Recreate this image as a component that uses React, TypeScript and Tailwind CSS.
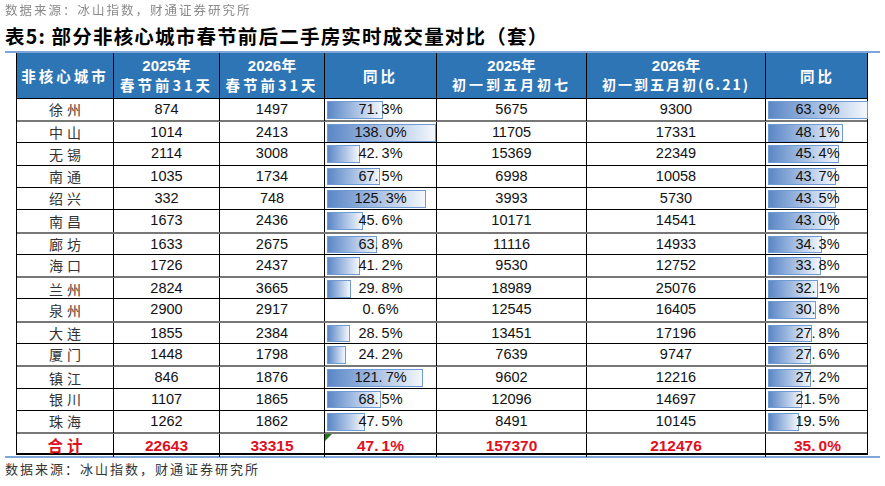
const rows: [string, number, number, number, number, number, number][] = [
  ["徐州", 874, 1497, 71.3, 5675, 9300, 63.9],
  ["中山", 1014, 2413, 138.0, 11705, 17331, 48.1],
  ["无锡", 2114, 3008, 42.3, 15369, 22349, 45.4],
  ["南通", 1035, 1734, 67.5, 6998, 10058, 43.7],
  ["绍兴", 332, 748, 125.3, 3993, 5730, 43.5],
  ["南昌", 1673, 2436, 45.6, 10171, 14541, 43.0],
  ["廊坊", 1633, 2675, 63.8, 11116, 14933, 34.3],
  ["海口", 1726, 2437, 41.2, 9530, 12752, 33.8],
  ["兰州", 2824, 3665, 29.8, 18989, 25076, 32.1],
  ["泉州", 2900, 2917, 0.6, 12545, 16405, 30.8],
  ["大连", 1855, 2384, 28.5, 13451, 17196, 27.8],
  ["厦门", 1448, 1798, 24.2, 7639, 9747, 27.6],
  ["镇江", 846, 1876, 121.7, 9602, 12216, 27.2],
  ["银川", 1107, 1865, 68.5, 12096, 14697, 21.5],
  ["珠海", 1262, 1862, 47.5, 8491, 10145, 19.5],
];

// rows whose top line is the thicker grey rule
const greyTop = [1, 6, 8, 10, 12];

const cols = "grid grid-cols-[97px_106px_105px_112px_150px_179px_103px]";
const cjk = "font-['Noto_Sans_CJK_SC',sans-serif]";
const num = "font-['Liberation_Sans','Noto_Sans_CJK_SC',sans-serif]";

function Pct({ v }: { v: number }) {
  const [a, b] = v.toFixed(1).split(".");
  return (
    <span className="relative">
      {a}.<span className="ml-[3px]">{b}%</span>
    </span>
  );
}

function BarCell({ v, max, full, last }: { v: number; max: number; full: number; last?: boolean }) {
  const w = (v / max) * full;
  return (
    <div className={`relative flex items-center justify-center ${last ? "" : "border-r border-black"}`}>
      {w > 1 && (
        <div
          className="absolute left-[2px] top-[2px] bottom-[2px] border border-[#6f9ad3] bg-gradient-to-r from-[#5b87c6] to-[#f4f7fc]"
          style={{ width: w }}
        />
      )}
      <Pct v={v} />
    </div>
  );
}

export default function App() {
  return (
    <div className="w-[885px] h-[486px] bg-white relative overflow-hidden">
      <div className={`${cjk} pl-[5px] pt-[1px] text-[12.5px] tracking-[2px] text-[#8a8a8a] blur-[0.3px]`}>
        数据来源：冰山指数，财通证券研究所
      </div>
      <div className={`${cjk} pl-[5px] mt-[3px] text-[19.5px] leading-[26px] font-bold tracking-[1.2px] text-black`}>
        表5: 部分非核心城市春节前后二手房实时成交量对比（套）
      </div>
      <div className="mt-[2px] ml-[5px] w-[875px] h-[2px] bg-[#7ea6d9]" />

      <div className="ml-[16px] w-[852px] border-x border-black">
        {/* header */}
        <div className={`${cols} h-[45px] bg-[#2e75b6] text-white font-bold text-[15px] leading-[19px]`}>
          <div className={`${cjk} flex items-center justify-center tracking-[3px] text-[14.5px] border-r border-black`}>非核心城市</div>
          {[
            ["2025年", "春节前31天"],
            ["2026年", "春节前31天"],
          ].map((h, i) => (
            <div key={i} className="flex flex-col items-center justify-center border-r border-black">
              <span className={num}>{h[0]}</span>
              <span className={`${cjk} tracking-[3px] text-[14.5px]`}>{h[1]}</span>
            </div>
          ))}
          <div className={`${cjk} flex items-center justify-center tracking-[3px] text-[14.5px] border-r border-black`}>同比</div>
          <div className="flex flex-col items-center justify-center border-r border-black">
            <span className={num}>2025年</span>
            <span className={`${cjk} tracking-[3px] text-[14px]`}>初一到五月初七</span>
          </div>
          <div className="flex flex-col items-center justify-center border-r border-black">
            <span className={num}>2026年</span>
            <span className={`${cjk} tracking-[2px] text-[14px]`}>初一到五月初(6.21)</span>
          </div>
          <div className={`${cjk} flex items-center justify-center tracking-[3px] text-[14.5px]`}>同比</div>
        </div>

        {/* body */}
        {rows.map((r, i) => (
          <div
            key={r[0]}
            className={`${cols} h-[22.3px] text-[14.5px] text-[#111] ${num} ${
              greyTop.includes(i) ? "border-t-2 border-[#777]" : "border-t border-black"
            }`}
          >
            <div className={`${cjk} flex items-center justify-center tracking-[4px] pl-[4px] text-[#333] text-[14px] border-r border-black`}>
              {r[0]}
            </div>
            <div className="flex items-center justify-center border-r border-black">{r[1]}</div>
            <div className="flex items-center justify-center border-r border-black">{r[2]}</div>
            <BarCell v={r[3]} max={138} full={109} />
            <div className="flex items-center justify-center border-r border-black">{r[4]}</div>
            <div className="flex items-center justify-center border-r border-black">{r[5]}</div>
            <BarCell v={r[6]} max={63.9} full={100} last />
          </div>
        ))}

        {/* total */}
        <div className={`${cols} h-[22.3px] border-t-2 border-b-2 border-t-[#777] border-b-black text-[15.5px] font-bold text-[#e0101e] ${num}`}>
          <div className={`${cjk} flex items-center justify-center tracking-[4px] pl-[4px] border-r border-black`}>合计</div>
          <div className="flex items-center justify-center border-r border-black">22643</div>
          <div className="flex items-center justify-center border-r border-black">33315</div>
          <div className="relative flex items-center justify-center border-r border-black">
            <svg className="absolute left-0 top-0" width="7" height="7" viewBox="0 0 7 7">
              <polygon points="0,0 7,0 0,7" fill="#1f7a1f" />
            </svg>
            <Pct v={47.1} />
          </div>
          <div className="flex items-center justify-center border-r border-black">157370</div>
          <div className="flex items-center justify-center border-r border-black">212476</div>
          <div className="flex items-center justify-center">
            <Pct v={35.0} />
          </div>
        </div>
      </div>
      <div className="mt-[1px] ml-[5px] w-[875px] h-[2px] bg-[#7ea6d9]" />

      <div className={`${cjk} pl-[5px] mt-[1px] text-[13px] tracking-[2px] text-[#333]`}>
        数据来源：冰山指数，财通证券研究所
      </div>
    </div>
  );
}
